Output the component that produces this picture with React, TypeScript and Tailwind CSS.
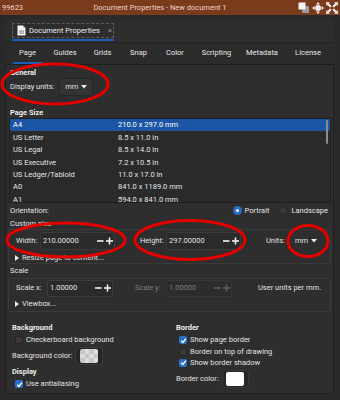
import React from "react";

const Check = ({ checked }: { checked: boolean }) =>
  checked ? (
    <span className="w-[8px] h-[8px] rounded-[2px] bg-[#2a6fc9] flex items-center justify-center shrink-0">
      <svg width="7" height="7" viewBox="0 0 8 8">
        <path d="M1.4 4.2 L3.3 6.1 L6.7 1.8" stroke="white" strokeWidth="1.6" fill="none" />
      </svg>
    </span>
  ) : (
    <span className="w-[8px] h-[8px] rounded-[2px] bg-[#383838] border border-[#242424] shrink-0" />
  );

const PlusMinus = ({ disabled }: { disabled?: boolean }) => (
  <svg width="18" height="10" viewBox="0 0 18 10" className="shrink-0">
    <g stroke={disabled ? "#5e5e5e" : "#f2f2f2"} strokeWidth="1.6">
      <line x1="1" y1="5" x2="7.5" y2="5" />
      <line x1="10" y1="5" x2="17" y2="5" />
      <line x1="13.5" y1="1.5" x2="13.5" y2="8.5" />
    </g>
  </svg>
);

const Tri = () => (
  <svg width="4" height="6" viewBox="0 0 4 6" className="shrink-0">
    <path d="M0 0 L4 3 L0 6 Z" fill="#ececec" />
  </svg>
);

const Caret = () => (
  <svg width="6" height="4" viewBox="0 0 6 4" className="shrink-0">
    <path d="M0 0 L6 0 L3 3.5 Z" fill="#eeeeee" />
  </svg>
);

const sizes: [string, string][] = [
  ["A4", "210.0 x 297.0 mm"],
  ["US Letter", "8.5 x 11.0 in"],
  ["US Legal", "8.5 x 14.0 in"],
  ["US Executive", "7.2 x 10.5 in"],
  ["US Ledger/Tabloid", "11.0 x 17.0 in"],
  ["A0", "841.0 x 1189.0 mm"],
  ["A1", "594.0 x 841.0 mm"],
];

const tabs: [string, string][] = [
  ["Page", "w-[37px]"],
  ["Guides", "w-[38px]"],
  ["Grids", "w-[37px]"],
  ["Snap", "w-[35px]"],
  ["Color", "w-[38px]"],
  ["Scripting", "w-[45px]"],
  ["Metadata", "w-[46px]"],
  ["License", "w-[46px]"],
];

export default function App() {
  return (
    <div className="relative w-[340px] h-[400px] overflow-hidden bg-[#292929] font-['Roboto',sans-serif] text-[7.5px] leading-none text-[#e2e2e2]">
      {/* Title bar */}
      <div className="h-[15px] bg-[#7a3a1c] flex items-center pl-[2px] pr-[2px] text-[#ead6cc]">
        <span className="w-[22px]">99623</span>
        <span className="flex-1 text-center text-[7.5px]">Document Properties - New document 1</span>
        <div className="w-[42px] flex items-center justify-end gap-[2px]">
          <svg width="12" height="12" viewBox="0 0 12 12">
            <rect x="4" y="4" width="7" height="7" fill="#9a9a9a" />
            <rect x="0.5" y="0.5" width="7" height="7" fill="#f4f4f4" />
          </svg>
          <svg width="12" height="12" viewBox="0 0 12 12">
            <circle cx="6" cy="6" r="3" fill="#f0f0f0" />
            <path d="M6 0 L8 2.5 L4 2.5 Z M6 12 L8 9.5 L4 9.5 Z M0 6 L2.5 4 L2.5 8 Z M12 6 L9.5 4 L9.5 8 Z" fill="#f0f0f0" />
          </svg>
          <svg width="12" height="12" viewBox="0 0 12 12">
            <path d="M0 0 L4 0.6 L0.6 4 Z M12 0 L8 0.6 L11.4 4 Z M0 12 L0.6 8 L4 11.4 Z M12 12 L11.4 8 L8 11.4 Z" fill="#f0f0f0" />
            <path d="M2 2 L10 10 M10 2 L2 10" stroke="#f0f0f0" strokeWidth="2" />
            <circle cx="6" cy="6" r="1.8" fill="#7a3a1c" />
          </svg>
        </div>
      </div>

      {/* Dock */}
      <div className="ml-[5px] w-[329px] mt-[4px] bg-[#2d2d2d]">
        {/* dock tab header */}
        <div className="h-[23px] pl-[7px] pt-[4px]">
          <div className="w-[102px]">
            <div className="h-[15px] border border-dashed border-[#5a5a5a] flex items-center pl-[4px] gap-[3px]">
              <svg width="9" height="11" viewBox="0 0 9 11" className="shrink-0">
                <path d="M0.5 0.5 H6 L8.5 3 V10.5 H0.5 Z" fill="#f2f2f2" />
                <path d="M6 0.5 V3 H8.5" fill="#bdbdbd" />
                <rect x="2" y="5" width="5" height="4" fill="#b8b8b8" />
              </svg>
              <span className="text-[7.5px] text-[#ececec]">Document Properties</span>
              <span className="ml-[5px] text-[#8a8a8a] text-[8px]">×</span>
            </div>
            <div className="mt-[1px] h-[2px] bg-[#1c5fb8]" />
          </div>
        </div>

        {/* notebook tabs */}
        <div className="h-[22px] flex pl-[4px] border-t border-[#242424] bg-[#2b2b2b]">
          {tabs.map(([t, w], i) => (
            <div key={t} className={`${w} flex flex-col items-center`}>
              <div className="h-[19px] flex items-center justify-center text-[#e6e6e6]">{t}</div>
              {i === 0 ? <div className="w-[30px] h-[2px] bg-[#1c5fb8]" /> : null}
            </div>
          ))}
        </div>

        {/* content pane */}
        <div className="h-[330px] border border-t-[#1e1e1e] border-[#1f1f1f] bg-[#2e2e2e] flex flex-col">
          <div className="h-[11px] pl-[4px] flex items-end font-bold text-[#ececec]">General</div>
          <div className="h-[22px] pl-[4px] flex items-center gap-[5px]">
            <span>Display units:</span>
            <div className="h-[18px] w-[34px] rounded-[3px] bg-[#343434] border border-[#262626] flex items-center justify-center gap-[3px]">
              <span>mm</span>
              <Caret />
            </div>
          </div>
          <div className="h-[20px] pl-[4px] flex items-end pb-[2px] font-bold text-[#ececec]">Page Size</div>

          {/* list */}
          <div className="ml-[3px] w-[322px] h-[85px] border border-[#1f1f1f] bg-[#2a2a2a] overflow-hidden relative">
            {sizes.map(([n, v], i) => (
              <div
                key={n}
                className={
                  i === 0
                    ? "h-[12.4px] flex items-center pl-[3px] bg-[#1b55a3] text-white"
                    : "h-[12.4px] flex items-center pl-[3px] text-[#e4e4e4]"
                }
              >
                <span className="w-[105px]">{n}</span>
                <span>{v}</span>
              </div>
            ))}
            <div className="absolute right-[2px] top-[1px] w-[2px] h-[24px] rounded-[1px] bg-[#8c8c8c]" />
          </div>

          {/* orientation */}
          <div className="h-[15px] pl-[4px] pr-[5px] flex items-center">
            <span className="flex-1">Orientation:</span>
            <span className="shrink-0 w-[9px] h-[9px] rounded-full bg-[#2a6fc9] flex items-center justify-center">
              <span className="w-[3px] h-[3px] rounded-full bg-white" />
            </span>
            <span className="shrink-0 ml-[3px]">Portrait</span>
            <span className="shrink-0 ml-[10px] w-[9px] h-[9px] rounded-full bg-[#383838] border border-[#242424]" />
            <span className="shrink-0 ml-[3px]">Landscape</span>
          </div>

          {/* custom size */}
          <div className="h-[11px] pl-[4px] flex items-center">Custom size</div>
          <div className="ml-[2px] w-[323px] h-[35px] border border-[#3a3a3a] rounded-[2px] flex flex-col">
            <div className="h-[22px] flex items-center pl-[7px]">
              <span className="w-[24px]">Width:</span>
              <div className="w-[75px] h-[18px] bg-[#2a2a2a] border border-[#3b3b3b] rounded-[2px] flex items-center pl-[2px]">
                <span className="flex-1">210.00000</span>
                <PlusMinus />
              </div>
              <span className="ml-[25px] w-[26px]">Height:</span>
              <div className="w-[75px] h-[18px] bg-[#2a2a2a] border border-[#3b3b3b] rounded-[2px] flex items-center pl-[2px]">
                <span className="flex-1">297.00000</span>
                <PlusMinus />
              </div>
              <span className="ml-[25px] w-[29px]">Units:</span>
              <span className="flex items-center gap-[3px]">
                mm
                <Caret />
              </span>
            </div>
            <div className="h-[11px] flex items-center pl-[6px] gap-[3px]">
              <Tri />
              <span>Resize page to content...</span>
            </div>
          </div>

          {/* scale */}
          <div className="h-[14px] pl-[4px] flex items-center">Scale</div>
          <div className="ml-[2px] w-[323px] h-[34px] border border-[#3a3a3a] rounded-[2px] flex flex-col">
            <div className="h-[18px] flex items-center pl-[7px]">
              <span className="w-[31px]">Scale x:</span>
              <div className="w-[66px] h-[17px] bg-[#2a2a2a] border border-[#3b3b3b] rounded-[2px] flex items-center pl-[2px]">
                <span className="flex-1">1.00000</span>
                <PlusMinus />
              </div>
              <span className="ml-[22px] w-[31px] text-[#7c7c7c]">Scale y:</span>
              <div className="w-[66px] h-[17px] bg-[#2c2c2c] border border-[#363636] rounded-[2px] flex items-center pl-[2px] text-[#7c7c7c]">
                <span className="flex-1">1.00000</span>
                <PlusMinus disabled />
              </div>
              <span className="ml-[26px]">User units per mm.</span>
            </div>
            <div className="h-[14px] flex items-center pl-[6px] gap-[3px]">
              <Tri />
              <span>Viewbox...</span>
            </div>
          </div>

          {/* bottom */}
          <div className="mt-[10px] flex">
            <div className="w-[170px] pl-[6px] flex flex-col">
              <div className="h-[12px] flex items-center font-bold text-[#ececec]">Background</div>
              <div className="h-[12px] flex items-center pl-[3px] gap-[3px]">
                <Check checked={false} />
                <span>Checkerboard background</span>
              </div>
              <div className="h-[20px] flex items-center gap-[3px]">
                <span>Background color:</span>
                <div className="w-[28px] h-[18px] rounded-[3px] bg-[#262626] border border-[#3a3a3a] flex items-center justify-center">
                  <div className="w-[18px] h-[14px] rounded-[2px] overflow-hidden grid grid-cols-4 grid-rows-3">
                    {Array.from({ length: 12 }).map((_, i) => (
                      <div key={i} className={(Math.floor(i / 4) + (i % 4)) % 2 === 0 ? "bg-[#c6c6c6]" : "bg-[#dcdcdc]"} />
                    ))}
                  </div>
                </div>
              </div>
              <div className="h-[12px] flex items-center font-bold text-[#ececec]">Display</div>
              <div className="h-[12px] flex items-center pl-[3px] gap-[3px]">
                <Check checked />
                <span>Use antialiasing</span>
              </div>
            </div>
            <div className="flex-1 flex flex-col">
              <div className="h-[12px] flex items-center font-bold text-[#ececec]">Border</div>
              <div className="h-[12px] flex items-center pl-[3px] gap-[3px]">
                <Check checked />
                <span>Show page border</span>
              </div>
              <div className="h-[11px] flex items-center pl-[3px] gap-[3px]">
                <Check checked={false} />
                <span>Border on top of drawing</span>
              </div>
              <div className="h-[11px] flex items-center pl-[3px] gap-[3px]">
                <Check checked />
                <span>Show border shadow</span>
              </div>
              <div className="h-[22px] flex items-center gap-[3px]">
                <span>Border color:</span>
                <div className="w-[27px] h-[18px] rounded-[3px] bg-[#262626] border border-[#3a3a3a] flex items-center justify-center">
                  <div className="w-[18px] h-[14px] rounded-[2px] bg-white" />
                </div>
              </div>
            </div>
          </div>
        </div>
      </div>

      {/* red annotation ellipses */}
      <svg className="absolute left-0 top-0 pointer-events-none" width="340" height="400" viewBox="0 0 340 400">
        <g stroke="#e50000" strokeWidth="3" fill="none">
          <ellipse cx="55" cy="84" rx="53" ry="20" />
          <ellipse cx="66" cy="240" rx="59" ry="17" />
          <ellipse cx="190" cy="240" rx="55" ry="19.5" />
          <ellipse cx="308" cy="241" rx="20" ry="15.5" />
        </g>
      </svg>
    </div>
  );
}
